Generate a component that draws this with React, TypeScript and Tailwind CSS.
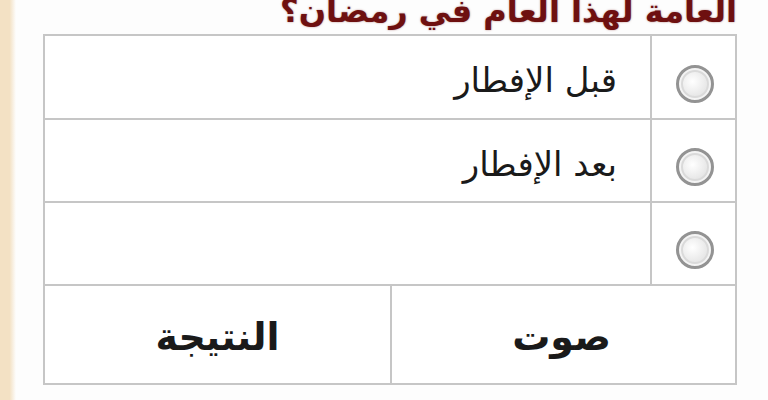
import React from "react";

const options = ["قبل الإفطار", "بعد الإفطار", ""];

function Radio() {
  return (
    <div className="flex h-[38px] w-[38px] items-center justify-center rounded-full border-[3px] border-[#939393] bg-[#f4f4f4]">
      <div className="h-[28px] w-[28px] rounded-full border-2 border-[#dadada] bg-[radial-gradient(circle_at_40%_40%,#ffffff,#dedede)]" />
    </div>
  );
}

export default function App() {
  return (
    <div
      className="flex h-[400px] w-[768px] overflow-hidden bg-[#fdfdfd]"
      style={{ fontFamily: '"DejaVu Sans", sans-serif' }}
    >
      <div className="h-full w-[16px] shrink-0 bg-[linear-gradient(to_right,#f3e1c4_0%,#f3e1c4_60%,#fdfdfd_100%)]" />
      <div className="flex flex-col pl-[27px]" dir="rtl">
        <h1 className="-mt-[12px] h-[46px] w-[694px] whitespace-nowrap text-[32px] font-bold leading-[46px] text-[#6e1010] [text-shadow:0_0_2px_rgba(110,16,16,0.5)]">
          العامة لهذا العام في رمضان؟
        </h1>
        <div className="w-[694px] border-2 border-[#c6c6c6] bg-white text-[#1a1a1a]">
          {options.map((label, i) => (
            <div
              key={i}
              className={`flex border-b-2 border-[#c6c6c6] ${i === 0 ? "h-[84px]" : "h-[83px]"}`}
            >
              <div className="flex w-[85px] shrink-0 items-center justify-center border-l-2 border-[#c6c6c6] pl-[2px] pt-[13px]">
                <Radio />
              </div>
              <div className="flex flex-1 items-center pr-[33px] pt-[6px] text-[34px] leading-none">
                {label}
              </div>
            </div>
          ))}
          <div className="grid h-[97px] grid-cols-[345px_1fr] text-[38px] font-bold leading-none">
            <div className="flex items-center justify-center border-l-2 border-[#c6c6c6] pr-[4px] pt-[4px]">
              صوت
            </div>
            <div className="flex items-center justify-center pt-[4px]">النتيجة</div>
          </div>
        </div>
      </div>
    </div>
  );
}
